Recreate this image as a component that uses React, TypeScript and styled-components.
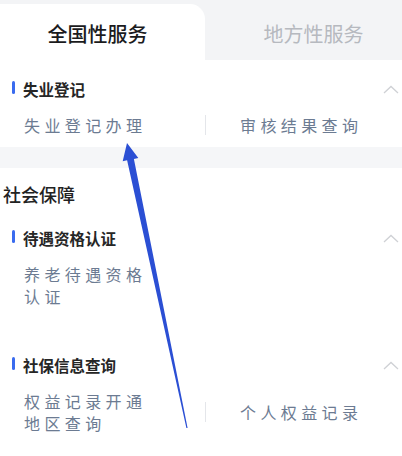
import React from "react";
import styled, { createGlobalStyle } from "styled-components";

const Global = createGlobalStyle`
  html, body { margin: 0; padding: 0; background: #ffffff; }
  body { font-family: "Noto Sans CJK SC", "Noto Sans", sans-serif; -webkit-font-smoothing: antialiased; }
  * { box-sizing: border-box; }
`;

const Page = styled.div`
  position: relative;
  width: 402px;
  height: 456px;
  overflow: hidden;
  background: #ffffff;
`;

const TabBar = styled.div`
  display: flex;
  height: 60px;
  padding-top: 4px;
  background: #f3f4f6;
`;

const Tab = styled.div<{ $active?: boolean; $shift: number }>`
  flex: ${(p) => (p.$active ? "0 0 205px" : "1 1 auto")};
  display: flex;
  align-items: center;
  justify-content: center;
  padding-left: ${(p) => (p.$shift > 0 ? p.$shift : 0)}px;
  padding-right: ${(p) => (p.$shift < 0 ? -p.$shift : 0)}px;
  padding-top: 3px;
  font-size: 20px;
  font-weight: ${(p) => (p.$active ? 500 : 400)};
  color: ${(p) => (p.$active ? "#1b1b1d" : "#b6b9bf")};
  background: ${(p) => (p.$active ? "#ffffff" : "transparent")};
  border-radius: ${(p) => (p.$active ? "0 15px 0 0" : "0")};
`;

const Section = styled.section<{ $top: number; $bottom: number }>`
  display: flex;
  flex-direction: column;
  padding-top: ${(p) => p.$top}px;
  padding-bottom: ${(p) => p.$bottom}px;
  background: #ffffff;
`;

const Gap = styled.div`
  height: 21px;
  background: #f5f6f8;
`;

const SectionTitle = styled.div`
  padding-left: 3px;
  height: 26px;
  line-height: 26px;
  font-size: 18px;
  font-weight: 500;
  color: #222222;
  margin-bottom: 19px;
`;

const Group = styled.div<{ $after?: number }>`
  display: flex;
  flex-direction: column;
  gap: 13px;
  margin-bottom: ${(p) => p.$after ?? 0}px;
`;

const GroupHeader = styled.div`
  display: flex;
  align-items: center;
  height: 24px;
  padding: 0 3px 0 12px;
`;

const Mark = styled.span`
  width: 3px;
  height: 13px;
  margin-top: -3px;
  margin-right: 8px;
  border-radius: 1.5px;
  background: #3a6bef;
`;

const GroupTitle = styled.span`
  flex: 1;
  font-size: 15.5px;
  font-weight: 600;
  color: #262626;
`;

const Items = styled.div`
  display: grid;
  grid-template-columns: 205px 1px 1fr;
  align-items: center;
`;

const Cell = styled.div<{ $right?: boolean }>`
  padding-left: ${(p) => (p.$right ? 34 : 24)}px;
`;

const ItemText = styled.span`
  display: block;
  width: 126px;
  font-size: 16px;
  line-height: 22px;
  letter-spacing: 4.4px;
  color: #6c7b92;
`;

const Divider = styled.div`
  width: 1px;
  height: 20px;
  background: #e4e6ea;
`;

const Arrow = styled.svg`
  position: absolute;
  left: 0;
  top: 0;
  pointer-events: none;
`;

const Chevron = () => (
  <svg width="16" height="9" viewBox="0 0 16 9">
    <polyline points="1,8 8,1.5 15,8" fill="none" stroke="#cfd1d5" strokeWidth="1.3" />
  </svg>
);

type G = { title: string; items: string[] };

const GroupBlock = ({ g, after }: { g: G; after?: number }) => (
  <Group $after={after}>
    <GroupHeader>
      <Mark />
      <GroupTitle>{g.title}</GroupTitle>
      <Chevron />
    </GroupHeader>
    <Items>
      <Cell>
        <ItemText>{g.items[0]}</ItemText>
      </Cell>
      {g.items[1] ? <Divider /> : <span />}
      <Cell $right>{g.items[1] ? <ItemText>{g.items[1]}</ItemText> : null}</Cell>
    </Items>
  </Group>
);

export default function App() {
  return (
    <Page>
      <Global />
      <TabBar>
        <Tab $active $shift={-10}>全国性服务</Tab>
        <Tab $shift={20}>地方性服务</Tab>
      </TabBar>
      <Section $top={17} $bottom={11}>
        <GroupBlock g={{ title: "失业登记", items: ["失业登记办理", "审核结果查询"] }} />
      </Section>
      <Gap />
      <Section $top={13} $bottom={20}>
        <SectionTitle>社会保障</SectionTitle>
        <GroupBlock after={46} g={{ title: "待遇资格认证", items: ["养老待遇资格认证"] }} />
        <GroupBlock g={{ title: "社保信息查询", items: ["权益记录开通地区查询", "个人权益记录"] }} />
      </Section>
      <Arrow width="402" height="456" viewBox="0 0 402 456">
        <polygon
          points="127,143 138.3,158 133.9,158.9 187.6,428 186.4,428 127.1,160.3 122.7,161.2"
          fill="#2b4fd4"
        />
      </Arrow>
    </Page>
  );
}
